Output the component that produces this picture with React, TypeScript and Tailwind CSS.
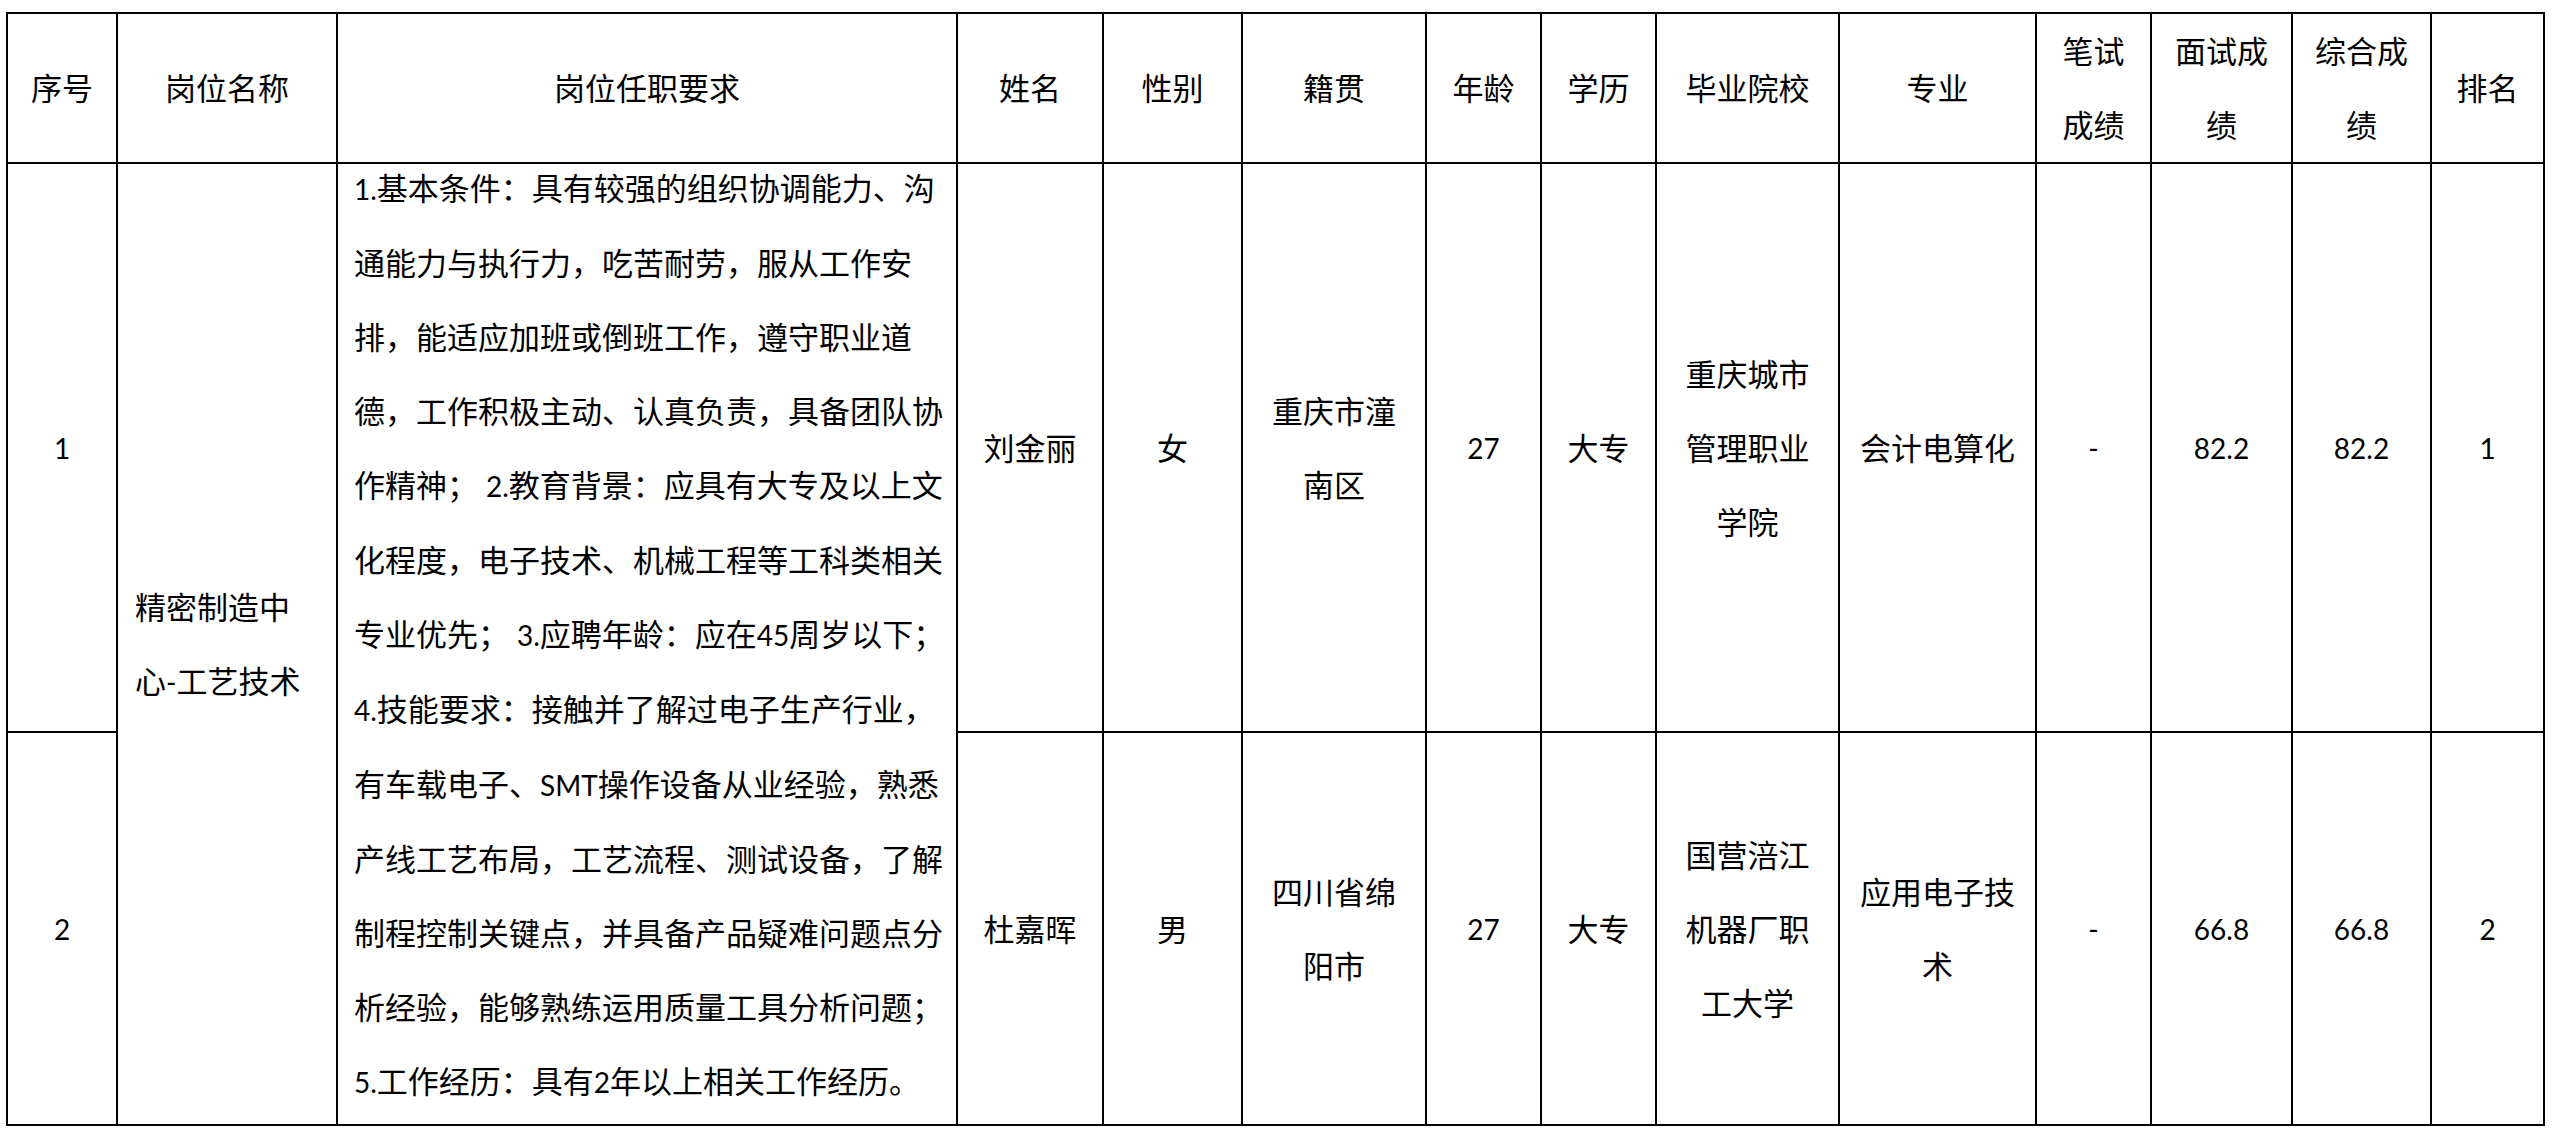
import React from 'react';

// 拉丁字符（数字、SMT 等）单独缩小，模拟 Calibri 的字宽
function L({ children }: { children: React.ReactNode }) {
  return <span className="text-[28px]">{children}</span>;
}

const headers: React.ReactNode[][] = [
  ['序号'],
  ['岗位名称'],
  ['岗位任职要求'],
  ['姓名'],
  ['性别'],
  ['籍贯'],
  ['年龄'],
  ['学历'],
  ['毕业院校'],
  ['专业'],
  ['笔试', '成绩'],
  ['面试成', '绩'],
  ['综合成', '绩'],
  ['排名'],
];

const requirement: React.ReactNode[] = [
  <><L>1.</L>基本条件：具有较强的组织协调能力、沟</>,
  <>通能力与执行力，吃苦耐劳，服从工作安</>,
  <>排，能适应加班或倒班工作，遵守职业道</>,
  <>德，工作积极主动、认真负责，具备团队协</>,
  <>作精神； <L>2.</L>教育背景：应具有大专及以上文</>,
  <>化程度，电子技术、机械工程等工科类相关</>,
  <>专业优先； <L>3.</L>应聘年龄：应在<L>45</L>周岁以下；</>,
  <><L>4.</L>技能要求：接触并了解过电子生产行业，</>,
  <>有车载电子、<L>SMT</L>操作设备从业经验，熟悉</>,
  <>产线工艺布局，工艺流程、测试设备，了解</>,
  <>制程控制关键点，并具备产品疑难问题点分</>,
  <>析经验，能够熟练运用质量工具分析问题；</>,
  <><L>5.</L>工作经历：具有<L>2</L>年以上相关工作经历。</>,
];

type Row = {
  no: string;
  name: string;
  gender: string;
  origin: string[];
  age: string;
  edu: string;
  school: string[];
  major: string[];
  written: string;
  interview: string;
  total: string;
  rank: string;
};

const rows: Row[] = [
  {
    no: '1',
    name: '刘金丽',
    gender: '女',
    origin: ['重庆市潼', '南区'],
    age: '27',
    edu: '大专',
    school: ['重庆城市', '管理职业', '学院'],
    major: ['会计电算化'],
    written: '-',
    interview: '82.2',
    total: '82.2',
    rank: '1',
  },
  {
    no: '2',
    name: '杜嘉晖',
    gender: '男',
    origin: ['四川省绵', '阳市'],
    age: '27',
    edu: '大专',
    school: ['国营涪江', '机器厂职', '工大学'],
    major: ['应用电子技', '术'],
    written: '-',
    interview: '66.8',
    total: '66.8',
    rank: '2',
  },
];

function Cell({ lines, latin }: { lines: React.ReactNode[]; latin?: boolean }) {
  return (
    <div className="flex flex-col items-center justify-center bg-white text-center">
      {lines.map((l, i) => (
        <div key={i} className={'whitespace-nowrap ' + (latin ? 'text-[28px]' : '')}>
          {l}
        </div>
      ))}
    </div>
  );
}

export default function App() {
  return (
    <div className="min-h-screen bg-white pl-[6px] pt-[12px] font-['Lato','Noto_Sans_CJK_SC',sans-serif] text-[31px] leading-[74px] text-black">
      <div className="grid w-fit grid-cols-[108px_218px_618px_144px_137px_182px_113px_113px_181px_195px_113px_139px_137px_111px] grid-rows-[148px_567px_391px] gap-[2px] bg-black p-[2px]">
        {headers.map((h, i) => (
          <Cell key={'h' + i} lines={h} />
        ))}

        {rows.map((r, ri) => (
          <React.Fragment key={r.no}>
            <Cell lines={[r.no]} latin />
            {ri === 0 && (
              <>
                <div className="row-span-2 flex flex-col justify-center bg-white pl-[17px]">
                  <div className="whitespace-nowrap">精密制造中</div>
                  <div className="whitespace-nowrap">
                    心<L>-</L>工艺技术
                  </div>
                </div>
                <div className="row-span-2 flex flex-col justify-center overflow-hidden bg-white pb-[18px] pl-[16px]">
                  {requirement.map((line, i) => (
                    <div key={i} className="whitespace-pre">
                      {line}
                    </div>
                  ))}
                </div>
              </>
            )}
            <Cell lines={[r.name]} />
            <Cell lines={[r.gender]} />
            <Cell lines={r.origin} />
            <Cell lines={[r.age]} latin />
            <Cell lines={[r.edu]} />
            <Cell lines={r.school} />
            <Cell lines={r.major} />
            <Cell lines={[r.written]} latin />
            <Cell lines={[r.interview]} latin />
            <Cell lines={[r.total]} latin />
            <Cell lines={[r.rank]} latin />
          </React.Fragment>
        ))}
      </div>
    </div>
  );
}
